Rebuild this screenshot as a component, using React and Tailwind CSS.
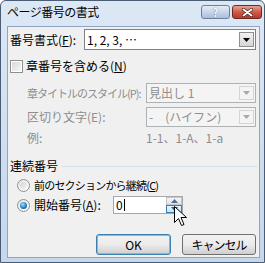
import React from "react";

function Arrow({ color = "#000" }) {
  return (
    <svg width="7" height="4" viewBox="0 0 7 4">
      <path d="M0 0h7L3.5 4z" fill={color} />
    </svg>
  );
}

function Combo({ text, disabled }) {
  return (
    <div
      className={`flex-1 h-full flex items-center border ${
        disabled ? "border-[#adb2b5] bg-[#f4f4f4] text-[#8d8d8d]" : "border-[#7f8185] bg-white text-black"
      }`}
    >
      <div className="flex-1 pl-[2px] leading-none whitespace-nowrap">{text}</div>
      <div
        className={`w-[15px] h-[calc(100%-4px)] mr-[1px] flex items-center justify-center border ${
          disabled ? "border-[#d2d4d6] bg-[#f4f4f4]" : "border-[#8e8f8f] bg-gradient-to-b from-[#f2f2f2] to-[#d6d6d6]"
        }`}
      >
        <Arrow color={disabled ? "#a8a8a8" : "#000"} />
      </div>
    </div>
  );
}

function Radio({ checked }) {
  return (
    <div className="w-[13px] h-[13px] rounded-full border border-[#8e8f8f] bg-gradient-to-br from-[#e6e6e6] to-[#fdfdfd] flex items-center justify-center">
      {checked ? (
        <div className="w-[7px] h-[7px] rounded-full bg-[radial-gradient(circle_at_40%_35%,#a6dcf7,#1f7ac0_60%,#0e4f8a)]" />
      ) : (
        <div className="w-[7px] h-[7px] rounded-full bg-gradient-to-br from-[#d4d4d4] to-[#f2f2f2]" />
      )}
    </div>
  );
}

export default function App() {
  return (
    <div className="w-[265px] h-[263px] bg-white font-['Noto_Sans_CJK_JP',sans-serif] text-[12px] text-black relative select-none">
      <div className="w-[265px] h-[263px] flex flex-col rounded-t-[6px] border border-[#4a5d75] bg-gradient-to-b from-[#dde8f5] to-[#c4d7ed]">
        {/* title bar */}
        <div className="h-[25px] flex items-start">
          <div className="pl-[6px] pt-[5px] leading-none text-[12px] text-black tracking-[-0.5px]">ページ番号の書式</div>
          <div className="flex-1" />
          <div className="mt-[4px] w-[29px] h-[14px] rounded-[3px] border border-[#6d819b] bg-gradient-to-b from-[#e4edf7] via-[#c6d6ea] to-[#a9bfdb] flex items-center justify-center text-[11px] font-bold text-white leading-none [text-shadow:0_0_1px_#3b4f6b]">
            ?
          </div>
          <div className="mt-[4px] ml-[2px] mr-[2px] w-[30px] h-[14px] rounded-[3px] border border-[#6b2a22] bg-gradient-to-b from-[#e6a397] via-[#cf5a45] to-[#b8392a] flex items-center justify-center">
            <svg width="11" height="9" viewBox="0 0 11 9">
              <path d="M1.5 1.5L9.5 7.5M9.5 1.5L1.5 7.5" stroke="#3b1a14" strokeWidth="3.2" strokeLinecap="round" />
              <path d="M1.5 1.5L9.5 7.5M9.5 1.5L1.5 7.5" stroke="#fff" strokeWidth="2" strokeLinecap="round" />
            </svg>
          </div>
        </div>
        {/* client */}
        <div className="flex-1 ml-[6px] mr-[4px] mb-[4px] border border-[#8fa5c0] bg-[#f0f0f0] flex flex-col">
          {/* row 1 */}
          <div className="mt-[2px] h-[21px] flex items-center pl-[2px] pr-[3px]">
            <div className="w-[74px] leading-none whitespace-nowrap">
              番号書式(<span className="underline">F</span>):
            </div>
            <Combo text="1, 2, 3, …" />
          </div>
          {/* checkbox */}
          <div className="mt-[8px] h-[16px] flex items-center pl-[2px]">
            <div className="w-[13px] h-[13px] border border-[#8e8f8f] bg-white flex items-center justify-center">
              <div className="w-[9px] h-[9px] bg-gradient-to-br from-[#d8d8d8] to-[#f6f6f6]" />
            </div>
            <div className="ml-[3px] leading-none whitespace-nowrap">
              章番号を含める(<span className="underline">N</span>)
            </div>
          </div>
          {/* chapter style */}
          <div className="mt-[9px] h-[20px] flex items-center pl-[19px] pr-[3px] text-[#8d8d8d]">
            <div className="w-[119px] leading-none whitespace-nowrap text-[11px] tracking-[-1px]">章タイトルのスタイル(P):</div>
            <Combo text="見出し 1" disabled />
          </div>
          {/* separator */}
          <div className="mt-[4px] h-[20px] flex items-center pl-[19px] pr-[3px] text-[#8d8d8d]">
            <div className="w-[119px] leading-none whitespace-nowrap">区切り文字(E):</div>
            <Combo text="-　(ハイフン)" disabled />
          </div>
          {/* example */}
          <div className="mt-[4px] h-[14px] flex items-center pl-[19px] text-[#8d8d8d]">
            <div className="w-[119px] leading-none">例:</div>
            <div className="leading-none whitespace-nowrap">1-1、1-A、1-a</div>
          </div>
          {/* group */}
          <div className="mt-[13px] h-[16px] flex items-center pl-[2px] pr-[2px]">
            <div className="leading-none whitespace-nowrap">連続番号</div>
            <div className="flex-1 ml-[4px] h-px bg-[#d5dfe5]" />
          </div>
          {/* radio 1 */}
          <div className="mt-[3px] h-[16px] flex items-center pl-[9px]">
            <Radio />
            <div className="ml-[4px] leading-none whitespace-nowrap text-[11px] tracking-[-0.8px]">
              前のセクションから継続(<span className="underline">C</span>)
            </div>
          </div>
          {/* radio 2 */}
          <div className="mt-[3px] h-[18px] flex items-center pl-[9px]">
            <Radio checked />
            <div className="ml-[4px] w-[79px] leading-none whitespace-nowrap">
              開始番号(<span className="underline">A</span>):
            </div>
            <div className="w-[70px] h-[18px] border border-[#a4a8ad] bg-white flex items-center">
              <div className="flex-1 pl-[2px] leading-none flex items-center">
                0<span className="inline-block w-px h-[12px] bg-black ml-px" />
              </div>
              <div className="w-[16px] h-full flex flex-col">
                <div className="flex-1 border border-[#c3c6ca] bg-gradient-to-b from-[#f4f4f4] to-[#e3e3e3] flex items-center justify-center">
                  <svg width="7" height="4" viewBox="0 0 7 4">
                    <path d="M0 4h7L3.5 0z" fill="#4d6f95" />
                  </svg>
                </div>
                <div className="flex-1 border border-[#3c7fb1] bg-gradient-to-b from-[#eaf6fd] to-[#bee6fd] flex items-center justify-center">
                  <Arrow color="#2c5d8e" />
                </div>
              </div>
            </div>
          </div>
          {/* buttons */}
          <div className="mt-[20px] h-[21px] flex justify-end pr-[3px]">
            <div className="w-[75px] h-[21px] rounded-[3px] border border-[#3c7fb1] shadow-[inset_0_0_0_1px_#48d3f9] bg-gradient-to-b from-[#f2f2f2] via-[#ebebeb] to-[#cfcfcf] flex items-center justify-center leading-none">
              OK
            </div>
            <div className="ml-[11px] w-[74px] h-[21px] rounded-[3px] border border-[#707070] bg-gradient-to-b from-[#f2f2f2] via-[#ebebeb] to-[#cfcfcf] flex items-center justify-center leading-none tracking-[-1px]">
              キャンセル
            </div>
          </div>
        </div>
      </div>
      {/* mouse cursor */}
      <svg className="absolute left-[174px] top-[206px]" width="13" height="21" viewBox="0 0 13 21">
        <path d="M0.5 0.5V16.5L4.5 12.5L7.5 19.5L10 18.5L7 11.5H12.5Z" fill="#fff" stroke="#000" strokeWidth="1" strokeLinejoin="miter" />
      </svg>
    </div>
  );
}
